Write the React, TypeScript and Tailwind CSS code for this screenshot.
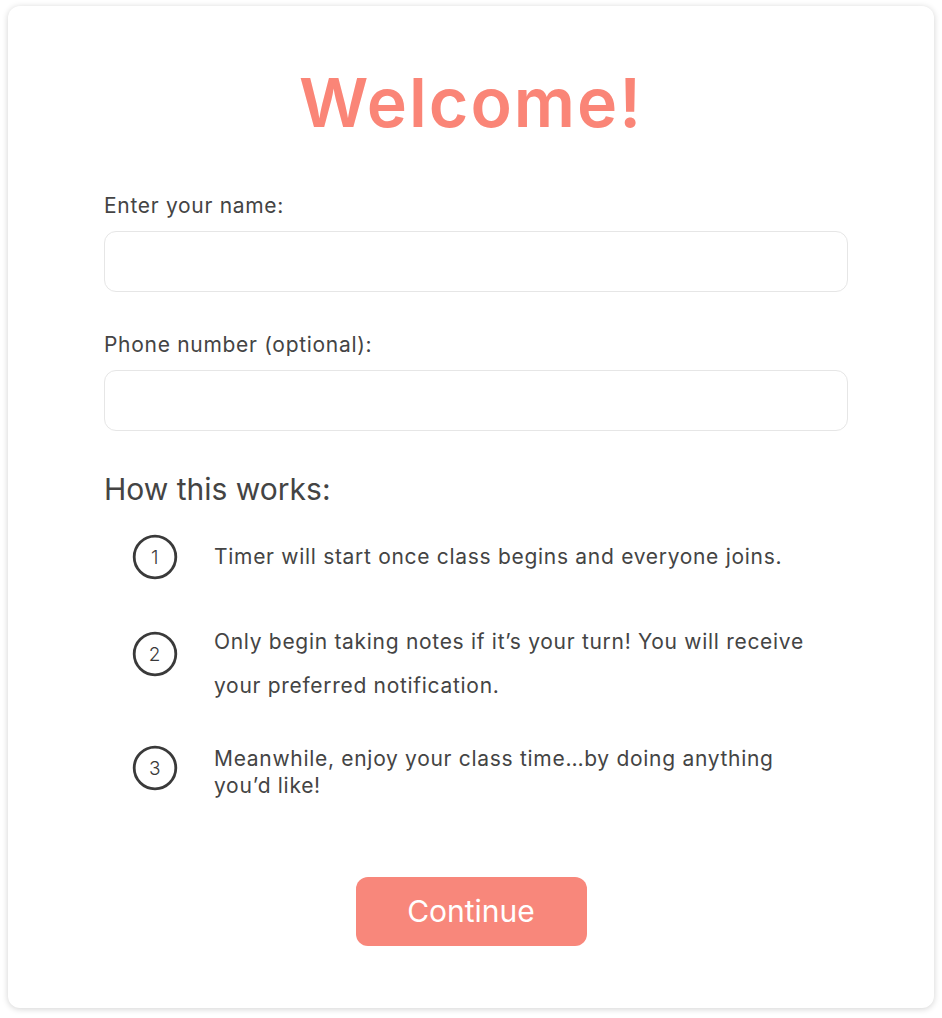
import React from "react";

const FONT = { fontFamily: "Inter, 'Noto Sans', sans-serif" };

function StepBadge({ n, className = "" }: { n: number; className?: string }) {
  return (
    <div className={`relative flex h-[46px] w-[46px] shrink-0 items-center justify-center ${className}`}>
      <svg viewBox="0 0 46 46" className="absolute inset-0 h-full w-full" fill="none">
        <circle cx="23" cy="23" r="20.8" stroke="#3a3a3a" strokeWidth="2.8" />
      </svg>
      <span className="relative text-[19px] font-light leading-none text-[#3a3a3a]">{n}</span>
    </div>
  );
}

function Field({ label, className = "" }: { label: string; className?: string }) {
  return (
    <label className={`block ${className}`}>
      <span className="block text-[21px] leading-[28px] tracking-[0.7px] text-[#444]">{label}</span>
      <input
        type="text"
        className="mt-[11px] block h-[61px] w-[744px] rounded-[12px] border border-[#e6e6e6] bg-white px-4 text-[20px] outline-none"
      />
    </label>
  );
}

export default function App() {
  return (
    <div className="min-h-screen bg-white pl-[8px] pt-[6px]" style={FONT}>
      <div className="flex h-[1002px] w-[926px] flex-col rounded-[12px] bg-white shadow-[0_1px_6px_rgba(0,0,0,0.18)]">
        <h1 className="mt-[56px] text-center text-[68px] font-semibold leading-[80px] tracking-[2px] text-[#fa8577]">
          Welcome!
        </h1>

        <div className="ml-[96px] mt-[50px]">
          <Field label="Enter your name:" />
          <Field label="Phone number (optional):" className="mt-[39px]" />
        </div>

        <div className="ml-[96px] mt-[40px]">
          <h2 className="text-[30px] leading-[36px] text-[#444]">How this works:</h2>
          <ol className="ml-[28px] mt-[27px] flex flex-col text-[21px] tracking-[0.7px] text-[#444]">
            <li className="flex items-center gap-[36px]">
              <StepBadge n={1} />
              <span className="leading-[28px]">Timer will start once class begins and everyone joins.</span>
            </li>
            <li className="mt-[40px] flex items-start gap-[36px]">
              <StepBadge n={2} className="mt-[11px]" />
              <span className="w-[595px] leading-[44px]">
                Only begin taking notes if it’s your turn! You will receive your preferred notification.
              </span>
            </li>
            <li className="mt-[37px] flex items-start gap-[36px]">
              <StepBadge n={3} />
              <span className="w-[580px] leading-[27px]">
                Meanwhile, enjoy your class time…by doing anything you’d like!
              </span>
            </li>
          </ol>
        </div>

        <div className="mt-[78px] flex justify-center">
          <button
            type="button"
            className="h-[69px] w-[231px] rounded-[12px] bg-[#f8877b] text-[30px] text-white"
          >
            Continue
          </button>
        </div>
      </div>
    </div>
  );
}
